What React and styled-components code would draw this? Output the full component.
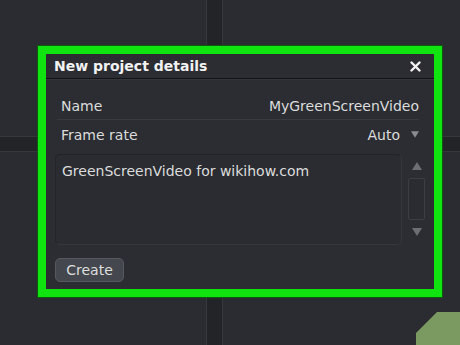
import React from "react";
import styled, { createGlobalStyle } from "styled-components";

const Global = createGlobalStyle`
  html, body { margin: 0; padding: 0; background: #24262b; }
  body { font-family: "DejaVu Sans", "Liberation Sans", sans-serif; }
`;

const Stage = styled.div`
  position: relative;
  width: 460px;
  height: 345px;
  overflow: hidden;
  background: #222428;
`;

const PanelGrid = styled.div`
  display: grid;
  grid-template-columns: 207px 1fr;
  grid-template-rows: 137px 1fr;
  column-gap: 15px;
  row-gap: 14px;
  width: 100%;
  height: 100%;
`;

const Panel = styled.div`
  background: #2a2c31;
  border-style: solid;
  border-color: #36383d;
  border-left-width: ${(p) => (p.$right ? 1 : 0)}px;
  border-right-width: ${(p) => (p.$right ? 0 : 1)}px;
  border-top-width: ${(p) => (p.$bottom ? 1 : 0)}px;
  border-bottom-width: ${(p) => (p.$bottom ? 0 : 1)}px;
`;

const Corner = styled.svg`
  position: absolute;
  right: 0;
  bottom: 0;
`;

const Dialog = styled.div`
  position: absolute;
  left: 38px;
  top: 46px;
  width: 388px;
  height: 235px;
  border: 8px solid #10e310;
  outline: 1px solid #0c5a0c;
  background: #2b2d32;
  color: #dcdcdc;
  display: flex;
  flex-direction: column;
`;

const TitleBar = styled.div`
  height: 24px;
  display: flex;
  align-items: center;
  justify-content: space-between;
  padding: 0 13px 0 8px;
  border-bottom: 1px solid #121316;
  box-shadow: 0 1px 0 #34363b;
`;

const Title = styled.div`
  font-weight: bold;
  font-size: 14px;
  color: #f2f2f2;
`;

const CloseIcon = styled.svg`
  display: block;
`;

const Body = styled.div`
  flex: 1;
  display: flex;
  flex-direction: column;
  padding: 14px 15px 0 9px;
`;

const Rows = styled.div`
  margin: 0 0 0 2px;
`;

const Row = styled.div`
  display: flex;
  align-items: center;
  justify-content: space-between;
  height: ${(p) => p.$h}px;
  padding-left: 4px;
  font-size: 14px;
  border-bottom: ${(p) => (p.$line ? "1px solid #383a3f" : "none")};
`;

const Value = styled.div`
  display: flex;
  align-items: center;
  gap: 11px;
`;

const Arrow = styled.svg`
  display: block;
`;

const EditArea = styled.div`
  display: flex;
  margin-top: 5px;
  margin-right: -12px;
`;

const TextBox = styled.div`
  width: 339px;
  height: 81px;
  padding: 8px 0 0 6px;
  border: 1px solid #222428;
  border-right-color: #35373c;
  border-bottom-color: #35373c;
  border-radius: 5px;
  font-size: 14px;
  background: #2a2c31;
`;

const ScrollBar = styled.div`
  flex: 1;
  display: flex;
  flex-direction: column;
  align-items: center;
  padding-top: 8px;
  gap: 8px;
`;

const Thumb = styled.div`
  width: 15px;
  height: 40px;
  border: 1px solid #3c3e43;
  border-radius: 2px;
  background: #2a2c31;
`;

const Button = styled.button`
  margin-top: 13px;
  width: 69px;
  height: 24px;
  padding: 0;
  border: 1px solid #55585e;
  border-radius: 5px;
  background: #44474d;
  color: #dedede;
  font-family: inherit;
  font-size: 14px;
`;

const Tri = ({ up, color = "#6c6e73", w = 10, h = 8 }) => (
  <Arrow width={w} height={h} viewBox="0 0 10 8">
    <polygon points={up ? "0,8 10,8 5,0" : "0,0 10,0 5,8"} fill={color} />
  </Arrow>
);

export default function App() {
  return (
    <>
      <Global />
      <Stage>
        <PanelGrid>
          <Panel />
          <Panel $right />
          <Panel $bottom />
          <Panel $right $bottom />
        </PanelGrid>
        <Corner width="44" height="33" viewBox="0 0 44 33">
          <polygon points="0,33 0,21 21,0 44,0 44,33" fill="#7a9a62" />
        </Corner>
        <Dialog>
          <TitleBar>
            <Title>New project details</Title>
            <CloseIcon width="11" height="11" viewBox="0 0 11 11">
              <path
                d="M1.5 1.5 L9.5 9.5 M9.5 1.5 L1.5 9.5"
                stroke="#f2f2f2"
                strokeWidth="2.4"
                strokeLinecap="round"
              />
            </CloseIcon>
          </TitleBar>
          <Body>
            <Rows>
              <Row $h={26} $line>
                <span>Name</span>
                <span>MyGreenScreenVideo</span>
              </Row>
              <Row $h={29}>
                <span>Frame rate</span>
                <Value>
                  <span>Auto</span>
                  <Tri color="#8a8c90" w={8} h={7} />
                </Value>
              </Row>
            </Rows>
            <EditArea>
              <TextBox>GreenScreenVideo for wikihow.com</TextBox>
              <ScrollBar>
                <Tri up />
                <Thumb />
                <Tri />
              </ScrollBar>
            </EditArea>
            <div>
              <Button>Create</Button>
            </div>
          </Body>
        </Dialog>
      </Stage>
    </>
  );
}
